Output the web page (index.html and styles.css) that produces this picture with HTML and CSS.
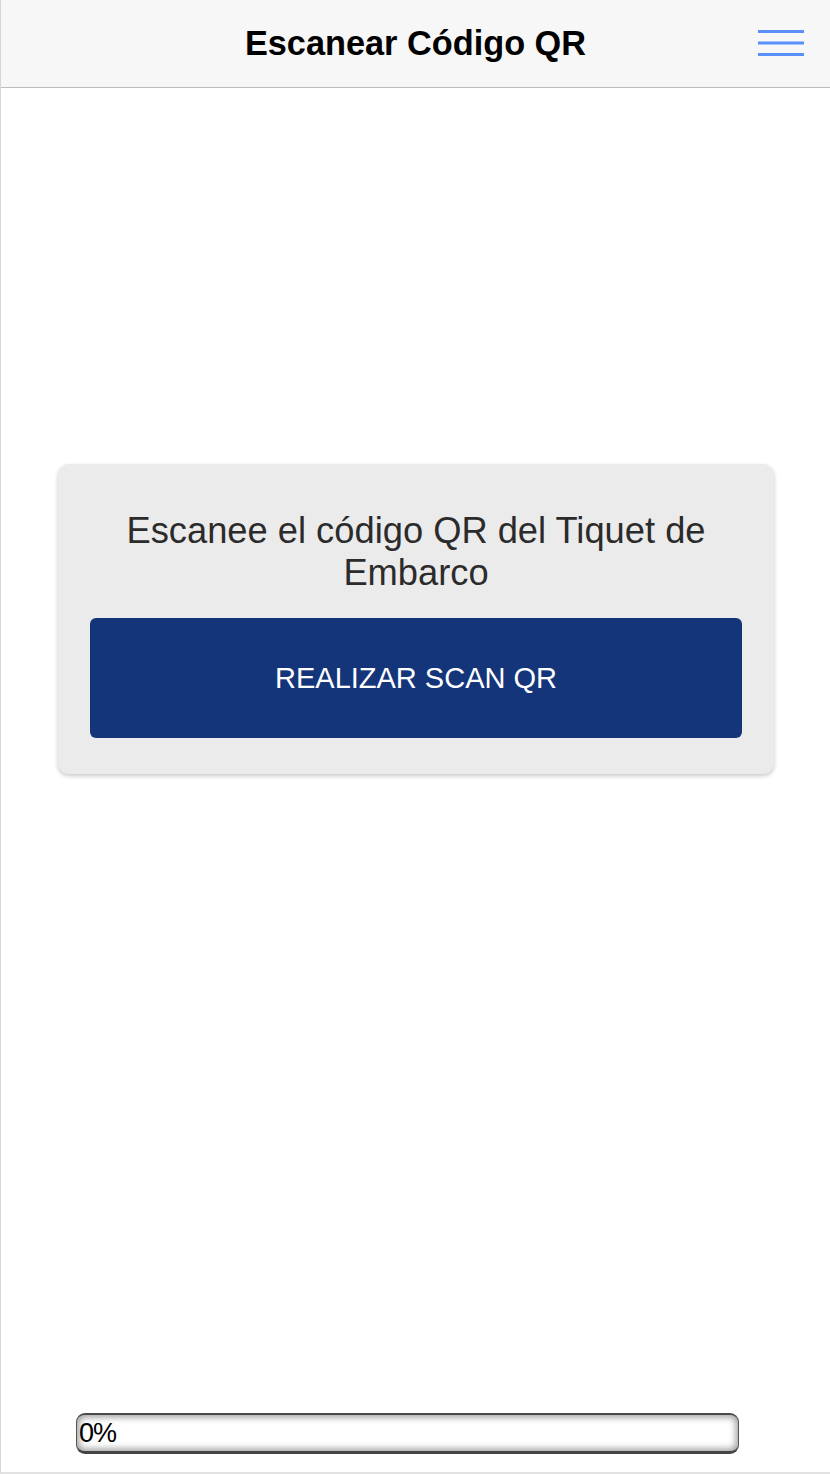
FILE: index.html
```html
<!DOCTYPE html>
<html lang="es">
<head>
<meta charset="utf-8">
<title>Escanear Código QR</title>
<link rel="stylesheet" href="styles.css">
</head>
<body>
<div class="app">
  <header class="topbar">
    <span></span>
    <h1 class="title">Escanear Código QR</h1>
    <button class="menu" aria-label="Menú">
      <svg width="46" height="26" viewBox="0 0 46 26">
        <rect x="0" y="0" width="46" height="3" fill="#5b8ff9"/>
        <rect x="0" y="11.5" width="46" height="3" fill="#5b8ff9"/>
        <rect x="0" y="23" width="46" height="3" fill="#5b8ff9"/>
      </svg>
    </button>
  </header>
  <main class="content">
    <section class="card">
      <p class="card-text">Escanee el código QR del Tiquet de Embarco</p>
      <button class="scan-btn">REALIZAR SCAN QR</button>
    </section>
  </main>
  <footer class="footer">
    <div class="progress"><span class="progress-label">0%</span></div>
  </footer>
</div>
</body>
</html>
```

FILE: styles.css
```css
* { box-sizing: border-box; }
html, body { margin: 0; padding: 0; background: #fff; }
body { font-family: "Liberation Sans", Arial, Helvetica, sans-serif; }

.app {
  width: 830px;
  height: 1474px;
  border-left: 1px solid #d6d6d6;
  border-bottom: 2px solid #e2e2e2;
  display: flex;
  flex-direction: column;
}

.topbar {
  height: 88px;
  background: #f7f7f7;
  border-bottom: 1px solid #bdbdbd;
  display: grid;
  grid-template-columns: 1fr auto 1fr;
  align-items: center;
}

.title {
  margin: 0;
  font-size: 34.3px;
  font-weight: bold;
  color: #000;
}

.menu {
  justify-self: end;
  margin-right: 26px;
  padding: 0;
  border: 0;
  background: none;
  display: flex;
  margin-top: -2px;
}

.content {
  padding: 376px 56px 0 57px;
}

.card {
  background: #ebebeb;
  border-radius: 11px;
  box-shadow: 0 2px 4px rgba(0,0,0,0.22);
  padding: 46px 32px 36px;
  display: flex;
  flex-direction: column;
  gap: 24px;
}

.card-text {
  margin: 0;
  text-align: center;
  font-size: 36.3px;
  line-height: 42px;
  color: #2b2b2b;
}

.scan-btn {
  height: 120px;
  border: 0;
  border-radius: 6px;
  background: #14357a;
  color: #fff;
  font-family: inherit;
  font-size: 29px;
}

.footer {
  margin-top: auto;
  padding: 0 91px 18px 75px;
}

.progress {
  height: 41px;
  border-radius: 9px;
  border: 1px solid #555;
  border-top: 2px solid #4a4a4a;
  border-bottom: 3px solid #444;
  background: #fff;
  box-shadow: inset 0 0 7px 2px rgba(0,0,0,0.4);
  display: flex;
  align-items: center;
  padding-left: 2px;
}

.progress-label {
  font-size: 27px;
  color: #000;
  letter-spacing: -1px;
}
```
